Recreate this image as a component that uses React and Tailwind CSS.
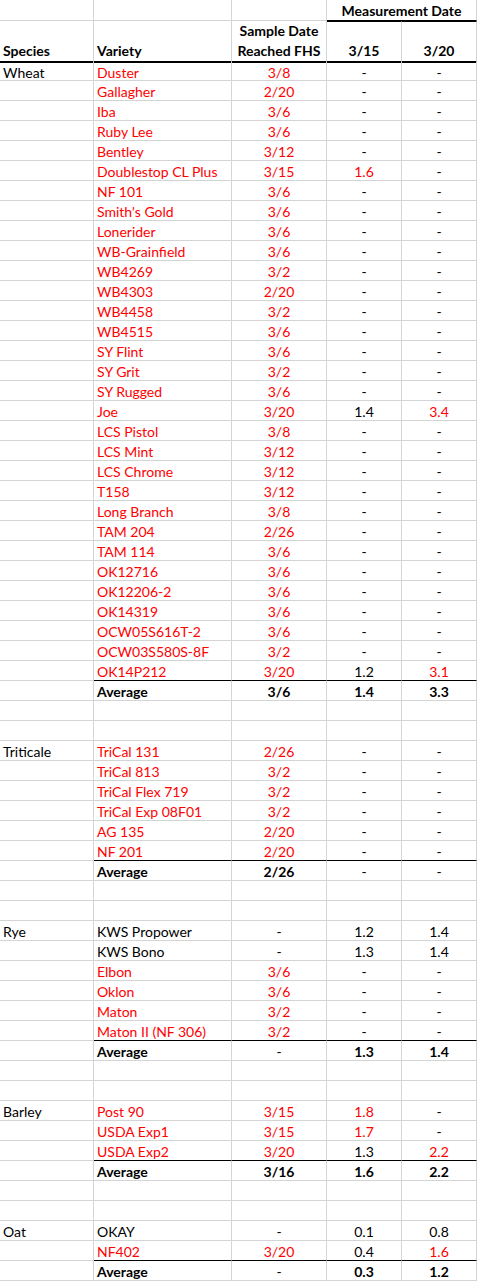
import React from 'react'

const RED = 'text-[#ff0000]'

// [variety, fhs date, 3/15, 3/20, colours] -- 'r' means red, '.' means black
const sections = [
  {
    species: 'Wheat',
    rows: [
      ['Duster', '3/8', '-', '-', 'rr..'],
      ['Gallagher', '2/20', '-', '-', 'rr..'],
      ['Iba', '3/6', '-', '-', 'rr..'],
      ['Ruby Lee', '3/6', '-', '-', 'rr..'],
      ['Bentley', '3/12', '-', '-', 'rr..'],
      ['Doublestop CL Plus', '3/15', '1.6', '-', 'rrr.'],
      ['NF 101', '3/6', '-', '-', 'rr..'],
      ["Smith's Gold", '3/6', '-', '-', 'rr..'],
      ['Lonerider', '3/6', '-', '-', 'rr..'],
      ['WB-Grainfield', '3/6', '-', '-', 'rr..'],
      ['WB4269', '3/2', '-', '-', 'rr..'],
      ['WB4303', '2/20', '-', '-', 'rr..'],
      ['WB4458', '3/2', '-', '-', 'rr..'],
      ['WB4515', '3/6', '-', '-', 'rr..'],
      ['SY Flint', '3/6', '-', '-', 'rr..'],
      ['SY Grit', '3/2', '-', '-', 'rr..'],
      ['SY Rugged', '3/6', '-', '-', 'rr..'],
      ['Joe', '3/20', '1.4', '3.4', 'rr.r'],
      ['LCS Pistol', '3/8', '-', '-', 'rr..'],
      ['LCS Mint', '3/12', '-', '-', 'rr..'],
      ['LCS Chrome', '3/12', '-', '-', 'rr..'],
      ['T158', '3/12', '-', '-', 'rr..'],
      ['Long Branch', '3/8', '-', '-', 'rr..'],
      ['TAM 204', '2/26', '-', '-', 'rr..'],
      ['TAM 114', '3/6', '-', '-', 'rr..'],
      ['OK12716', '3/6', '-', '-', 'rr..'],
      ['OK12206-2', '3/6', '-', '-', 'rr..'],
      ['OK14319', '3/6', '-', '-', 'rr..'],
      ['OCW05S616T-2', '3/6', '-', '-', 'rr..'],
      ['OCW03S580S-8F', '3/2', '-', '-', 'rr..'],
      ['OK14P212', '3/20', '1.2', '3.1', 'rr.r'],
    ],
    avg: ['3/6', '1.4', '3.3'],
  },
  {
    species: 'Triticale',
    rows: [
      ['TriCal 131', '2/26', '-', '-', 'rr..'],
      ['TriCal 813', '3/2', '-', '-', 'rr..'],
      ['TriCal Flex 719', '3/2', '-', '-', 'rr..'],
      ['TriCal Exp 08F01', '3/2', '-', '-', 'rr..'],
      ['AG 135', '2/20', '-', '-', 'rr..'],
      ['NF 201', '2/20', '-', '-', 'rr..'],
    ],
    avg: ['2/26', '-', '-'],
  },
  {
    species: 'Rye',
    rows: [
      ['KWS Propower', '-', '1.2', '1.4', '....'],
      ['KWS Bono', '-', '1.3', '1.4', '....'],
      ['Elbon', '3/6', '-', '-', 'rr..'],
      ['Oklon', '3/6', '-', '-', 'rr..'],
      ['Maton', '3/2', '-', '-', 'rr..'],
      ['Maton II (NF 306)', '3/2', '-', '-', 'rr..'],
    ],
    avg: ['-', '1.3', '1.4'],
  },
  {
    species: 'Barley',
    rows: [
      ['Post 90', '3/15', '1.8', '-', 'rrr.'],
      ['USDA Exp1', '3/15', '1.7', '-', 'rrr.'],
      ['USDA Exp2', '3/20', '1.3', '2.2', 'rr.r'],
    ],
    avg: ['3/16', '1.6', '2.2'],
  },
  {
    species: 'Oat',
    rows: [
      ['OKAY', '-', '0.1', '0.8', '....'],
      ['NF402', '3/20', '0.4', '1.6', 'rr.r'],
    ],
    avg: ['-', '0.3', '1.2'],
    last: true,
  },
]

const cols = 'grid grid-cols-[94px_138px_95px_75px_75px]'

function Cell({ children, className = '', dark = false, center = false }) {
  return (
    <div
      className={`h-full pt-[1px] border-r border-b border-r-[#d4d4d4] whitespace-nowrap overflow-hidden leading-[19px] ${
        dark ? 'border-b-black' : 'border-b-[#d4d4d4]'
      } ${center ? 'text-center' : 'pl-[3px]'} ${children === '-' ? 'font-normal' : ''} ${className}`}
    >
      {children}
    </div>
  )
}

function Row({ cells = ['', '', '', '', ''], colors = '.....', dark = false, bold = false, first = false }) {
  return (
    <div className={`${cols} ${first ? 'h-[19px]' : 'h-[20px]'} ${bold ? 'font-bold' : ''}`}>
      <Cell className={colors[0] === 'r' ? RED : ''}>{cells[0]}</Cell>
      <Cell dark={dark} className={colors[1] === 'r' ? RED : ''}>{cells[1]}</Cell>
      <Cell dark={dark} center className={colors[2] === 'r' ? RED : ''}>{cells[2]}</Cell>
      <Cell dark={dark} center className={colors[3] === 'r' ? RED : ''}>{cells[3]}</Cell>
      <Cell dark={dark} center className={colors[4] === 'r' ? RED : ''}>{cells[4]}</Cell>
    </div>
  )
}

export default function App() {
  let firstRow = true

  return (
    <div className="w-[477px] bg-white text-black font-['Lato',sans-serif] text-[14px]">
      {/* header, row 1 */}
      <div className={`${cols} h-[21px] font-bold`}>
        <div className="border-r border-b border-[#d4d4d4]" />
        <div className="border-r border-b border-[#d4d4d4]" />
        <div className="border-r border-b border-[#d4d4d4]" />
        <div className="col-span-2 pt-[1px] border-r border-r-[#d4d4d4] border-b border-b-black text-center leading-[19px]">
          Measurement Date
        </div>
      </div>

      {/* header, row 2 */}
      <div className={`${cols} h-[41px] font-bold leading-[20px]`}>
        <div className="flex items-end pl-[3px] border-r border-r-[#d4d4d4] border-b-2 border-b-black">Species</div>
        <div className="flex items-end pl-[3px] border-r border-r-[#d4d4d4] border-b-2 border-b-black">Variety</div>
        <div className="flex flex-col justify-end items-center border-r border-r-[#d4d4d4] border-b-2 border-b-black">
          <span>Sample Date</span>
          <span>Reached FHS</span>
        </div>
        <div className="flex items-end justify-center border-t border-t-black border-r border-r-[#d4d4d4] border-b-2 border-b-black">3/15</div>
        <div className="flex items-end justify-center border-t border-t-black border-r border-r-[#d4d4d4] border-b-2 border-b-black">3/20</div>
      </div>

      {sections.map((s) => (
        <React.Fragment key={s.species}>
          {s.rows.map((r, i) => {
            const isFirst = firstRow
            firstRow = false
            return (
              <Row
                key={r[0]}
                first={isFirst}
                cells={[i === 0 ? s.species : '', r[0], r[1], r[2], r[3]]}
                colors={'.' + r[4]}
                dark={i === s.rows.length - 1}
              />
            )
          })}
          <Row bold cells={['', 'Average', ...s.avg]} />
          {!s.last && (
            <>
              <Row />
              <Row />
            </>
          )}
        </React.Fragment>
      ))}
    </div>
  )
}
